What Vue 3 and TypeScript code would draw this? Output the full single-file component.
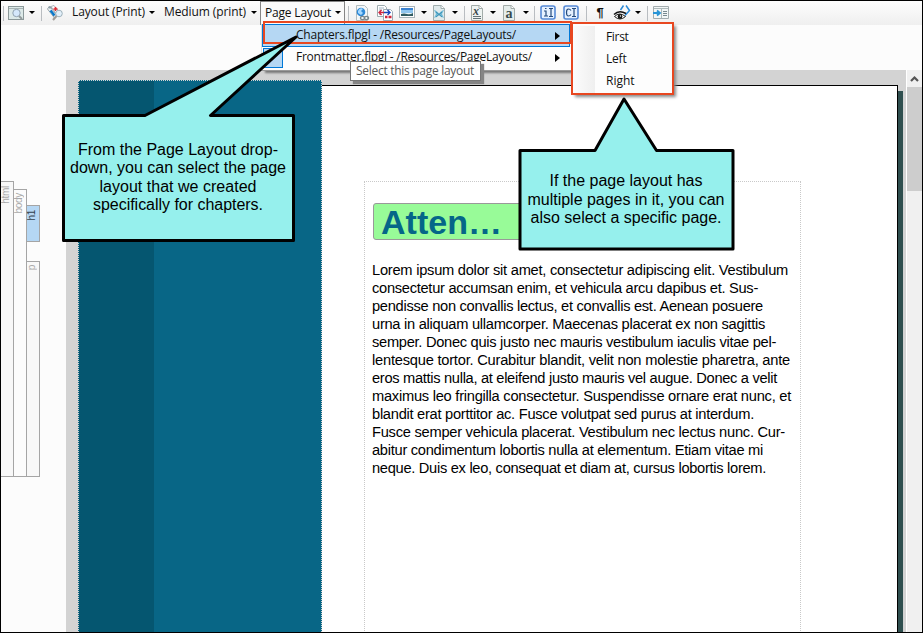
<script setup lang="ts">
interface Line { text: string; width: number }

// Spreads a line's glyphs so that it takes the given width.
const vFit = {
  mounted(el: HTMLElement, binding: { value: number }) {
    const natural = el.getBoundingClientRect().width
    const count = (el.textContent ?? '').length
    el.style.letterSpacing = `${(binding.value - natural) / count}px`
  },
}

const bodyLines: Line[] = [
  { text: 'Lorem ipsum dolor sit amet, consectetur adipiscing elit. Vestibulum', width: 416 },
  { text: 'consectetur accumsan enim, et vehicula arcu dapibus et. Sus-', width: 386 },
  { text: 'pendisse non convallis lectus, et convallis est. Aenean posuere', width: 391 },
  { text: 'urna in aliquam ullamcorper. Maecenas placerat ex non sagittis', width: 393 },
  { text: 'semper. Donec quis justo nec mauris vestibulum iaculis vitae pel-', width: 404 },
  { text: 'lentesque tortor. Curabitur blandit, velit non molestie pharetra, ante', width: 418 },
  { text: 'eros mattis nulla, at eleifend justo mauris vel augue. Donec a velit', width: 405 },
  { text: 'maximus leo fringilla consectetur. Suspendisse ornare erat nunc, et', width: 419 },
  { text: 'blandit erat porttitor ac. Fusce volutpat sed purus at interdum.', width: 382 },
  { text: 'Fusce semper vehicula placerat. Vestibulum nec lectus nunc. Cur-', width: 413 },
  { text: 'abitur condimentum lobortis nulla at elementum. Etiam vitae mi', width: 391 },
  { text: 'neque. Duis ex leo, consequat et diam at, cursus lobortis lorem.', width: 394 },
]

const chapterNote: Line[] = [
  { text: 'From the Page Layout drop-', width: 200 },
  { text: 'down, you can select the page', width: 216 },
  { text: 'layout that we created', width: 157 },
  { text: 'specifically for chapters.', width: 170 },
]

const pageNote: Line[] = [
  { text: 'If the page layout has', width: 153 },
  { text: 'multiple pages in it, you can', width: 197 },
  { text: 'also select a specific page.', width: 191 },
]

const pages: Line[] = [
  { text: 'First', width: 22.5 },
  { text: 'Left', width: 20.5 },
  { text: 'Right', width: 28.5 },
]
</script>

<template>
  <div class="window">
    <div class="toolbar">
      <i class="sep" />
      <svg class="icon" viewBox="0 0 16 16">
        <rect x=".5" y="1.5" width="15" height="13" fill="#dce9e8" stroke="#8b9899" />
        <path d="M1 3.5h14" stroke="#a9b5b5" />
        <circle cx="8.5" cy="8" r="3.7" fill="#d5e8fb" stroke="#91a3b1" />
        <path d="M11 11l3 3" stroke="#939b9c" stroke-width="2" />
      </svg>
      <i class="caret" />
      <i class="sep" />
      <svg class="icon" viewBox="0 0 16 16">
        <path d="M0.500 4l2-3 7 9-2 3z" fill="#eef3f5" stroke="#9aa6ac" />
        <path d="M4 1.500l3-1 4 5-2 3z" fill="#fff" stroke="#aab3b8" />
        <path d="M3.500 5.500l4 5" stroke="#0876ca" stroke-width="2.500" />
        <path d="M1.500 2.500h3M3 1v3" stroke="#8da0a9" />
        <path d="M6.500 4h4M8.500 2v4" stroke="#df2d36" stroke-width="1.600" />
        <circle cx="12" cy="8.500" r="3.300" fill="#e3f0fa" stroke="#9eb1bb" />
        <path d="M9.500 11l-3.500 4" stroke="#a09c98" stroke-width="2" />
      </svg>
      <div class="label first-label"><span v-fit="73">Layout (Print)</span></div>
      <i class="caret" />
      <div class="label"><span v-fit="82">Medium (print)</span></div>
      <i class="caret" />
      <div class="combo"><span v-fit="66">Page Layout</span><i class="caret" /></div>
      <i class="sep" />
      <svg class="icon" viewBox="0 0 16 16">
        <path d="M2.500.500h8l3 3v12h-11z" fill="#f4f7f8" stroke="#b3bcbe" />
        <circle cx="7" cy="7" r="4.300" fill="#2f8ad7" />
        <path d="M4 6q2-4 5-2l-2 2 2 2-2 2-3-2z" fill="#a7d9ff" />
        <ellipse cx="8.500" cy="13" rx="2" ry="1.600" fill="none" stroke="#7b888d" stroke-width="1.300" />
        <ellipse cx="12.500" cy="13" rx="2" ry="1.600" fill="none" stroke="#7b888d" stroke-width="1.300" />
      </svg>
      <svg class="icon" viewBox="0 0 16 16">
        <path d="M.500.500h7l2 2v9h-9z" fill="#fff" stroke="#9daaae" />
        <path d="M2 3h5M2 5h3M2 9.500h3" stroke="#a6b8c4" />
        <path d="M6.500 4.500h7l2 2v9h-9z" fill="#fff" stroke="#9dabb5" />
        <path d="M2 7.500h5M4.500 5l-2.500 2.500 2.500 2.500" fill="none" stroke="#d22740" stroke-width="1.400" />
        <path d="M7 7.500h6M10.500 5l2.500 2.500-2.500 2.500" fill="none" stroke="#1846bb" stroke-width="1.400" />
        <path d="M8 12h2.500M11.500 12h3" stroke="#d0263b" stroke-width="2.500" />
      </svg>
      <svg class="icon" viewBox="0 0 16 16">
        <rect x=".500" y="1.500" width="15" height="11" fill="#fff" stroke="#a9b3b8" />
        <path d="M2 3h12v3H2z" fill="#3b82cf" />
        <path d="M2 5h12v3H2z" fill="#8fc5ee" />
        <path d="M2 8h12v1H2z" fill="#e6f3fa" />
        <path d="M2 9q3-1 6 0t6-1v3H2z" fill="#2f5a60" />
      </svg>
      <i class="caret" />
      <svg class="icon" viewBox="0 0 16 16">
        <path d="M2.500.500h8l3 3v12h-11z" fill="#e0eaeb" stroke="#a0adad" />
        <path d="M10 .500v3h3.500" fill="#fff" stroke="#a0adad" />
        <path d="M3 5q2 0 5 3.500Q11 5 13 5l-2 4 2 4q-3-1-5-3-2 2-5 3l2-4z" fill="#6db9d6" />
        <path d="M5 7l6 5M11 7l-6 5" stroke="#3a8fb3" />
      </svg>
      <i class="caret" />
      <i class="sep" />
      <svg class="icon" viewBox="0 0 16 16">
        <path d="M2.500.500h8l3 3v12h-11z" fill="#eef3f1" stroke="#a2aba8" />
        <path d="M10 .500v3h3.500" fill="#fff" stroke="#a2aba8" />
        <text class="glyph x-glyph" x="4" y="10">x</text>
        <path d="M4 11.500h8M4 13.500h8" stroke="#647377" />
      </svg>
      <i class="caret" />
      <svg class="icon" viewBox="0 0 16 16">
        <path d="M2.500.500h8l3 3v12h-11z" fill="#e5edeb" stroke="#a2aba8" />
        <path d="M10 .500v3h3.500" fill="#fff" stroke="#a2aba8" />
        <text class="glyph a-glyph" x="4.500" y="13">a</text>
      </svg>
      <i class="caret" />
      <i class="sep" />
      <svg class="icon" viewBox="0 0 16 16">
        <rect x="1" y="1" width="14" height="13" rx="2" fill="#e6f1ff" stroke="#5589d6" stroke-width="1.600" />
        <path d="M4 6h2v5M4 11h4M5 3.500h1.500M9 3.500h4M9 11.500h4M11 3.500v8" fill="none" stroke="#234a7d" stroke-width="1.200" />
      </svg>
      <svg class="icon" viewBox="0 0 16 16">
        <rect x="1" y="1" width="14" height="13" rx="2" fill="#e6f1ff" stroke="#5589d6" stroke-width="1.600" />
        <path d="M8 5.500Q7 4 5.500 4 3.500 4 3.500 7.500T5.500 11Q7 11 8 9.500M9 3.500h4M9 11.500h4M11 3.500v8" fill="none" stroke="#234a7d" stroke-width="1.200" />
      </svg>
      <i class="sep" />
      <div class="pilcrow">¶</div>
      <svg class="icon" viewBox="0 0 16 16">
        <path d="M9.500 .500L6.500 5M12 .500l3.500 5-4.500 5" fill="none" stroke="#2b8bd8" stroke-width="1.500" />
        <path d="M0 9.500q5-5 12-1" fill="none" stroke="#111" stroke-width="1.500" />
        <path d="M.500 11.500q5-5 11 0-5.500 5-11 0z" fill="#fff" stroke="#20201d" />
        <circle cx="6" cy="11.500" r="2.400" fill="#151512" />
        <circle cx="6.500" cy="11" r=".7" fill="#fff" />
      </svg>
      <i class="caret" />
      <i class="sep" />
      <svg class="icon" viewBox="0 0 16 16">
        <path d="M.500 1.500h15v12H.500z" fill="#f3f6f6" stroke="#a3acae" />
        <path d="M1 3.500h14M8.500 3v10" stroke="#aeb9ba" />
        <path d="M10 6.500h4M10 8.500h4M10 10.500h4" stroke="#79898e" />
        <path d="M0 8h6M4 5.500L7 8l-3 2.500" fill="none" stroke="#2794d6" stroke-width="1.800" />
      </svg>
    </div>

    <div class="workspace">
      <div class="structure">
        <div class="tag html"><span>html</span></div>
        <div class="tag body"><span>body</span></div>
        <div class="leaves">
          <div class="tag h1"><span>h1</span></div>
          <div class="tag para"><span>p</span></div>
        </div>
      </div>
      <div class="canvas">
        <div class="page">
          <div class="band"><div class="band-edge" /></div>
          <div class="frame">
            <h1><span v-fit="121">Atten…</span></h1>
            <p><span v-for="line in bodyLines" :key="line.text" class="line"><span v-fit="line.width">{{ line.text }}</span></span></p>
          </div>
        </div>
      </div>
      <div class="scrollbar">
        <svg class="up" viewBox="0 0 15 17"><path d="M4 11l3.500-3.500L11 11" fill="none" stroke="#555" stroke-width="2.200" /></svg>
        <div class="thumb" />
      </div>
    </div>

    <div class="menu">
      <div class="entry selected"><i class="check" /><span class="entry-text"><span v-fit="220">Chapters.flpgl - /Resources/PageLayouts/</span></span><i class="arrow" /></div>
      <div class="entry second"><i class="check on" /><span class="entry-text"><span v-fit="236">Frontmatter.flpgl - /Resources/PageLayouts/</span></span><i class="arrow" /></div>
    </div>
    <div class="highlight" />
    <div class="tooltip"><span v-fit="118">Select this page layout</span></div>
    <div class="submenu">
      <div class="choices">
        <div v-for="page in pages" :key="page.text" class="choice"><span v-fit="page.width">{{ page.text }}</span></div>
      </div>
    </div>

    <div class="callout chapter-callout">
      <svg viewBox="0 0 240 212"><path d="M5.500 82.500H85L236 4 150.500 82.500H233.500V207.500H3.500V82.500z" /></svg>
      <div class="note"><div v-for="line in chapterNote" :key="line.text"><span v-fit="line.width">{{ line.text }}</span></div></div>
    </div>
    <div class="callout page-callout">
      <svg viewBox="0 0 220 158"><path d="M3 54.500H78L107 3 139.500 54.500H216V153H3z" /></svg>
      <div class="note"><div v-for="line in pageNote" :key="line.text"><span v-fit="line.width">{{ line.text }}</span></div></div>
    </div>
  </div>
</template>

<style>
body { overflow: hidden; }
</style>

<style scoped>
* { box-sizing: border-box; }
span { white-space: nowrap; }
.window {
  position: relative;
  width: 923px;
  height: 633px;
  border: 1px solid #000;
  background: #fcfcfc;
  overflow: hidden;
  display: flex;
  flex-direction: column;
  color: #111;
  font: 12px/16px "Open Sans", "Noto Sans", sans-serif;
}
.toolbar {
  flex: none;
  height: 24px;
  display: grid;
  grid-template-columns: 5px 20px 12px 7px 20px 81px 12px 89px 13px 85px 7px 20px 26px 18px 15px 16px 16px 3px 22px 10px 22px 11px 7px 20px 26px 5px 22px 22px 10px 9px 18px;
  align-items: center;
  justify-items: center;
  background: linear-gradient(#fdfdfd, #efefef);
}
.sep { width: 1px; height: 15px; background: #b9bdc1; }
.icon { width: 16px; height: 16px; display: block; overflow: visible; }
.caret { width: 0; height: 0; border: 3px solid transparent; border-top-color: #000; border-bottom: 0; margin-bottom: 1px; }
.label { justify-self: start; padding-left: 6px; height: 18px; }
.first-label { padding-left: 7px; }
.combo {
  align-self: stretch;
  width: 85px;
  display: flex;
  align-items: center;
  justify-content: space-between;
  padding: 0 3px 2px 4px;
  border: 1px solid #858585;
  border-bottom: 0;
  background: #fafafa;
}
.combo .caret { margin-bottom: 0; }
.glyph { fill: #39494b; font-family: "Liberation Serif", serif; font-weight: bold; }
.x-glyph { font-size: 12px; font-style: italic; }
.a-glyph { font-size: 14px; }
.pilcrow { font: bold 13px/20px "Liberation Sans", sans-serif; }

.workspace { flex: 1; min-height: 0; display: flex; padding-top: 45px; }
.structure { flex: none; width: 65px; display: flex; align-items: flex-start; padding-top: 111px; height: 407px; align-self: flex-start; }
.tag {
  width: 13px;
  border: 1px solid #a5a5a5;
  border-left: 0;
  background: #f8f8f8;
  color: #a9a9a9;
  font: 10px/10px "Liberation Sans", Arial, sans-serif;
  letter-spacing: -.3px;
}
.tag span { display: block; width: 10px; writing-mode: vertical-rl; transform: rotate(180deg); }
.html { height: 296px; padding-top: 4px; }
.body { height: 288px; margin-top: 8px; padding-top: 3px; background: #fcfcfc; }
.leaves { display: flex; flex-direction: column; gap: 19px; padding-top: 24px; }
.h1 { height: 37px; padding-top: 4px; background: #b5d7f4; color: #34424c; }
.para { height: 216px; padding-top: 3px; }

.canvas { flex: none; width: 840px; background: #d3d3d3; padding: 15px 8px 0 12px; overflow: hidden; }
.page {
  position: relative;
  height: 700px;
  border: 1px solid #000;
  border-left: 0;
  background: #fff;
  box-shadow: 5px 6px 0 #2f4f4f;
  padding: 95px 96px 0 286px;
}
.band { position: absolute; left: 0; top: -6px; width: 244px; height: 700px; background: #086686; border: 1px dotted #d3d3d3; }
.band-edge { width: 75px; height: 100%; background: #055670; }
.frame { width: 437px; height: 600px; border: 1px dotted #c9c9c9; padding: 21px 8px; }
.frame h1 {
  margin: 0;
  width: 340px;
  height: 37px;
  border: 1px solid #999;
  border-radius: 3px;
  background: #98fb98;
  color: #056688;
  padding-left: 7px;
  font: bold 34px/36px "Liberation Sans", Arial, sans-serif;
}
.frame p { margin: 21px 0 0 -1px; color: #000; font: 14.667px/18px "Liberation Sans", Arial, sans-serif; }
.line { display: block; }

.scrollbar { flex: none; width: 16px; border-left: 1px solid #fff; background: #f0f0f0; }
.up { display: block; width: 15px; height: 17px; }
.thumb { height: 104px; background: #cdcdcd; }

.menu {
  position: absolute;
  left: 260px;
  top: 23px;
  width: 311px;
  height: 47px;
  border: 1px solid #999;
  border-top: 0;
  border-left-color: #ddd;
  background: #fdfdfd;
  box-shadow: 3px 3px 2px -1px #777;
}
.entry { display: flex; align-items: center; width: 308px; height: 23px; border: 1px solid transparent; padding-right: 9px; }
.second { margin-top: -1px; }
.selected { border-color: #0078d7; background: #b5d7f3; }
.check { width: 20px; height: 20px; }
.on { border: 1px solid #0078d7; background: #b5d7f3; }
.entry-text { flex: 1; padding-left: 13px; margin-top: -1px; }
.arrow { border: 4px solid transparent; border-left: 5px solid #000; border-right: 0; }
.highlight { position: absolute; left: 262px; top: 20px; width: 309px; height: 23px; border: 2px solid #e84720; }
.tooltip {
  position: absolute;
  left: 349px;
  top: 60px;
  width: 131px;
  height: 20px;
  border: 1px solid #767676;
  background: #fff;
  box-shadow: 3px 3px 1px #858585;
  color: #575757;
  padding: 1px 5px;
}
.submenu {
  position: absolute;
  left: 570px;
  top: 21px;
  width: 103px;
  height: 73px;
  border: 2px solid #e84720;
  background: #fdfdfd;
  box-shadow: 3px 3px 3px -1px #888;
  padding: 2px 2px 2px 0;
}
.choices { height: 67px; background: linear-gradient(90deg, #fcfcfc, #efefef) 0 0 / 22px 100% no-repeat; padding-left: 33px; }
.choice { height: 22px; line-height: 22px; }

.callout { position: absolute; color: #000; font: 16px/18.300px "Liberation Sans", Arial, sans-serif; text-align: center; }
.callout svg { display: block; width: 100%; height: 100%; }
.callout path { fill: #96f0ed; stroke: #000; stroke-width: 3; stroke-linejoin: round; }
.note { position: absolute; left: 0; }
.chapter-callout { left: 59px; top: 32px; width: 240px; height: 212px; }
.chapter-callout .note { width: 236px; top: 108px; }
.page-callout { left: 516px; top: 95px; width: 220px; height: 158px; }
.page-callout .note { width: 218px; top: 76.400px; }
</style>
